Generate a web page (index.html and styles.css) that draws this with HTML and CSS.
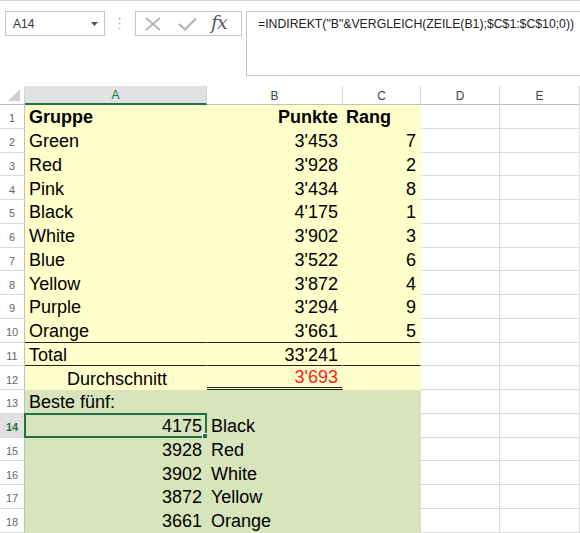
FILE: index.html
```html
<!DOCTYPE html>
<html>
<head>
<meta charset="utf-8">
<link rel="stylesheet" href="styles.css">
</head>
<body>
<div class="fbar">
  <div class="namebox">
    <span class="nb-text">A14</span>
    <svg class="nb-arrow" width="7" height="4" viewBox="0 0 7 4"><path d="M0 0H7L3.5 4Z" fill="#555"/></svg>
  </div>
  <svg class="grip" width="3" height="13" viewBox="0 0 3 13"><circle cx="1.5" cy="1.5" r="1" fill="#bbb"/><circle cx="1.5" cy="6.5" r="1" fill="#bbb"/><circle cx="1.5" cy="11.5" r="1" fill="#bbb"/></svg>
  <div class="btnbox">
    <svg class="ico-x" width="18" height="14" viewBox="0 0 18 14"><path d="M2 1L16 13M16 1L2 13" stroke="#b4b4b4" stroke-width="1.8" fill="none"/></svg>
    <svg class="ico-ok" width="19" height="14" viewBox="0 0 19 14"><path d="M1 7L7 12.5L18 1.5" stroke="#b4b4b4" stroke-width="2.2" fill="none"/></svg>
    <span class="fx">fx</span>
  </div>
  <div class="formula">=INDIREKT("B"&amp;VERGLEICH(ZEILE(B1);$C$1:$C$10;0))</div>
</div>

<div class="sheet">
  <div class="corner"><svg width="12" height="12" viewBox="0 0 12 12"><path d="M12 0V12H0Z" fill="#d0d0d0"/></svg></div>
  <div class="ch ch-sel">A</div>
  <div class="ch">B</div>
  <div class="ch">C</div>
  <div class="ch">D</div>
  <div class="ch">E</div>

  <div class="rh">1</div>
  <div class="c y b">Gruppe</div>
  <div class="c y b r">Punkte</div>
  <div class="c y b lft">Rang</div>
  <div class="c"></div><div class="c"></div>

  <div class="rh">2</div>
  <div class="c y">Green</div>
  <div class="c y r">3'453</div>
  <div class="c y r">7</div>
  <div class="c"></div><div class="c"></div>

  <div class="rh">3</div>
  <div class="c y">Red</div>
  <div class="c y r">3'928</div>
  <div class="c y r">2</div>
  <div class="c"></div><div class="c"></div>

  <div class="rh">4</div>
  <div class="c y">Pink</div>
  <div class="c y r">3'434</div>
  <div class="c y r">8</div>
  <div class="c"></div><div class="c"></div>

  <div class="rh">5</div>
  <div class="c y">Black</div>
  <div class="c y r">4'175</div>
  <div class="c y r">1</div>
  <div class="c"></div><div class="c"></div>

  <div class="rh">6</div>
  <div class="c y">White</div>
  <div class="c y r">3'902</div>
  <div class="c y r">3</div>
  <div class="c"></div><div class="c"></div>

  <div class="rh">7</div>
  <div class="c y">Blue</div>
  <div class="c y r">3'522</div>
  <div class="c y r">6</div>
  <div class="c"></div><div class="c"></div>

  <div class="rh">8</div>
  <div class="c y">Yellow</div>
  <div class="c y r">3'872</div>
  <div class="c y r">4</div>
  <div class="c"></div><div class="c"></div>

  <div class="rh">9</div>
  <div class="c y">Purple</div>
  <div class="c y r">3'294</div>
  <div class="c y r">9</div>
  <div class="c"></div><div class="c"></div>

  <div class="rh">10</div>
  <div class="c y bb">Orange</div>
  <div class="c y r bb">3'661</div>
  <div class="c y r bb">5</div>
  <div class="c"></div><div class="c"></div>

  <div class="rh">11</div>
  <div class="c y bb">Total</div>
  <div class="c y r bb">33'241</div>
  <div class="c y bb"></div>
  <div class="c"></div><div class="c"></div>

  <div class="rh">12</div>
  <div class="c y ind">Durchschnitt</div>
  <div class="c y r red dbl">3'693</div>
  <div class="c y"></div>
  <div class="c"></div><div class="c"></div>

  <div class="rh">13</div>
  <div class="c g">Beste fünf:</div>
  <div class="c g"></div>
  <div class="c g"></div>
  <div class="c"></div><div class="c"></div>

  <div class="rh rh-sel">14</div>
  <div class="c g r sel">4175</div>
  <div class="c g">Black</div>
  <div class="c g"></div>
  <div class="c"></div><div class="c"></div>

  <div class="rh">15</div>
  <div class="c g r">3928</div>
  <div class="c g">Red</div>
  <div class="c g"></div>
  <div class="c"></div><div class="c"></div>

  <div class="rh">16</div>
  <div class="c g r">3902</div>
  <div class="c g">White</div>
  <div class="c g"></div>
  <div class="c"></div><div class="c"></div>

  <div class="rh">17</div>
  <div class="c g r">3872</div>
  <div class="c g">Yellow</div>
  <div class="c g"></div>
  <div class="c"></div><div class="c"></div>

  <div class="rh">18</div>
  <div class="c g r">3661</div>
  <div class="c g">Orange</div>
  <div class="c g"></div>
  <div class="c"></div><div class="c"></div>
</div>
</body>
</html>
```

FILE: styles.css
```css
* { box-sizing: border-box; }
html, body { margin: 0; padding: 0; background: #fff; }
body {
  width: 580px;
  height: 533px;
  overflow: hidden;
  font-family: "Liberation Sans", Arial, sans-serif;
}

/* formula bar */
.fbar {
  height: 86px;
  border-top: 1px solid #d6d6d6;
  display: flex;
  align-items: flex-start;
  padding-top: 10px;
}
.namebox {
  margin-left: 5px;
  width: 100px;
  height: 25px;
  border: 1px solid #c6c6c6;
  display: flex;
  align-items: center;
  justify-content: space-between;
  padding: 0 6px 0 7px;
}
.nb-text { font-size: 12px; color: #333; }
.grip { margin: 6px 0 0 13px; }
.btnbox {
  margin-left: 14px;
  width: 107px;
  height: 25px;
  border: 1px solid #c6c6c6;
  display: flex;
  align-items: center;
  padding-left: 8px;
}
.ico-x { margin-left: 0; }
.ico-ok { margin-left: 16px; }
.fx {
  margin-left: 14px;
  font-family: "DejaVu Serif", "Liberation Serif", serif;
  font-style: italic;
  font-size: 19px;
  color: #5a5a5a;
  line-height: 1;
  margin-top: -3px;
  letter-spacing: -1px;
}
.formula {
  margin-left: 4px;
  flex: 1;
  height: 65px;
  border: 1px solid #c6c6c6;
  border-right: none;
  padding: 5px 0 0 11px;
  font-size: 12.25px;
  color: #222;
  white-space: nowrap;
}

/* sheet grid */
.sheet {
  display: grid;
  grid-template-columns: 25px 182px 136px 78px 79px 80px;
  grid-template-rows: 19px;
  grid-auto-rows: 23.75px;
}
.corner {
  border-right: 1px solid #d4d4d4;
  border-bottom: 1px solid #c0c0c0;
  display: flex;
  align-items: flex-end;
  justify-content: flex-end;
  padding: 0 4px 3px 0;
}
.ch {
  border-right: 1px solid #d4d4d4;
  border-bottom: 1px solid #c0c0c0;
  font-size: 12px;
  color: #444;
  display: flex;
  align-items: center;
  justify-content: center;
  padding-top: 1px;
}
.ch-sel {
  background: #e1e1e1;
  color: #217346;
  border-bottom: 2px solid #217346;
}
.rh {
  border-right: 1px solid #c0c0c0;
  border-bottom: 1px solid #dadada;
  font-size: 11px;
  color: #666;
  display: flex;
  align-items: center;
  justify-content: center;
  padding-top: 4px;
}
.rh-sel {
  background: #e1e1e1;
  color: #217346;
  font-weight: bold;
}
.c {
  border-right: 1px solid #dadada;
  border-bottom: 1px solid #dadada;
  font-size: 18px;
  color: #000;
  display: flex;
  align-items: center;
  padding: 3px 4px 0 4px;
  white-space: nowrap;
  position: relative;
}
.y { background: #ffffcc; border-color: transparent; }
.g { background: #d8e4bc; border-color: transparent; }
.b { font-weight: bold; }
.r { justify-content: flex-end; }
.lft { padding-left: 3px; }
.ind { padding-left: 42px; }
.red { color: #ff1a1a; }
.bb { border-bottom: 1px solid #222; }
.dbl { border-bottom: 3px double #222; padding-top: 2px; }

.sel::before {
  content: "";
  position: absolute;
  left: -1px;
  top: -1px;
  right: -1px;
  bottom: -1px;
  border: 2px solid #217346;
}
.sel::after {
  content: "";
  position: absolute;
  right: -4px;
  bottom: -4px;
  width: 6px;
  height: 6px;
  background: #217346;
  border: 1px solid #fff;
}
```
